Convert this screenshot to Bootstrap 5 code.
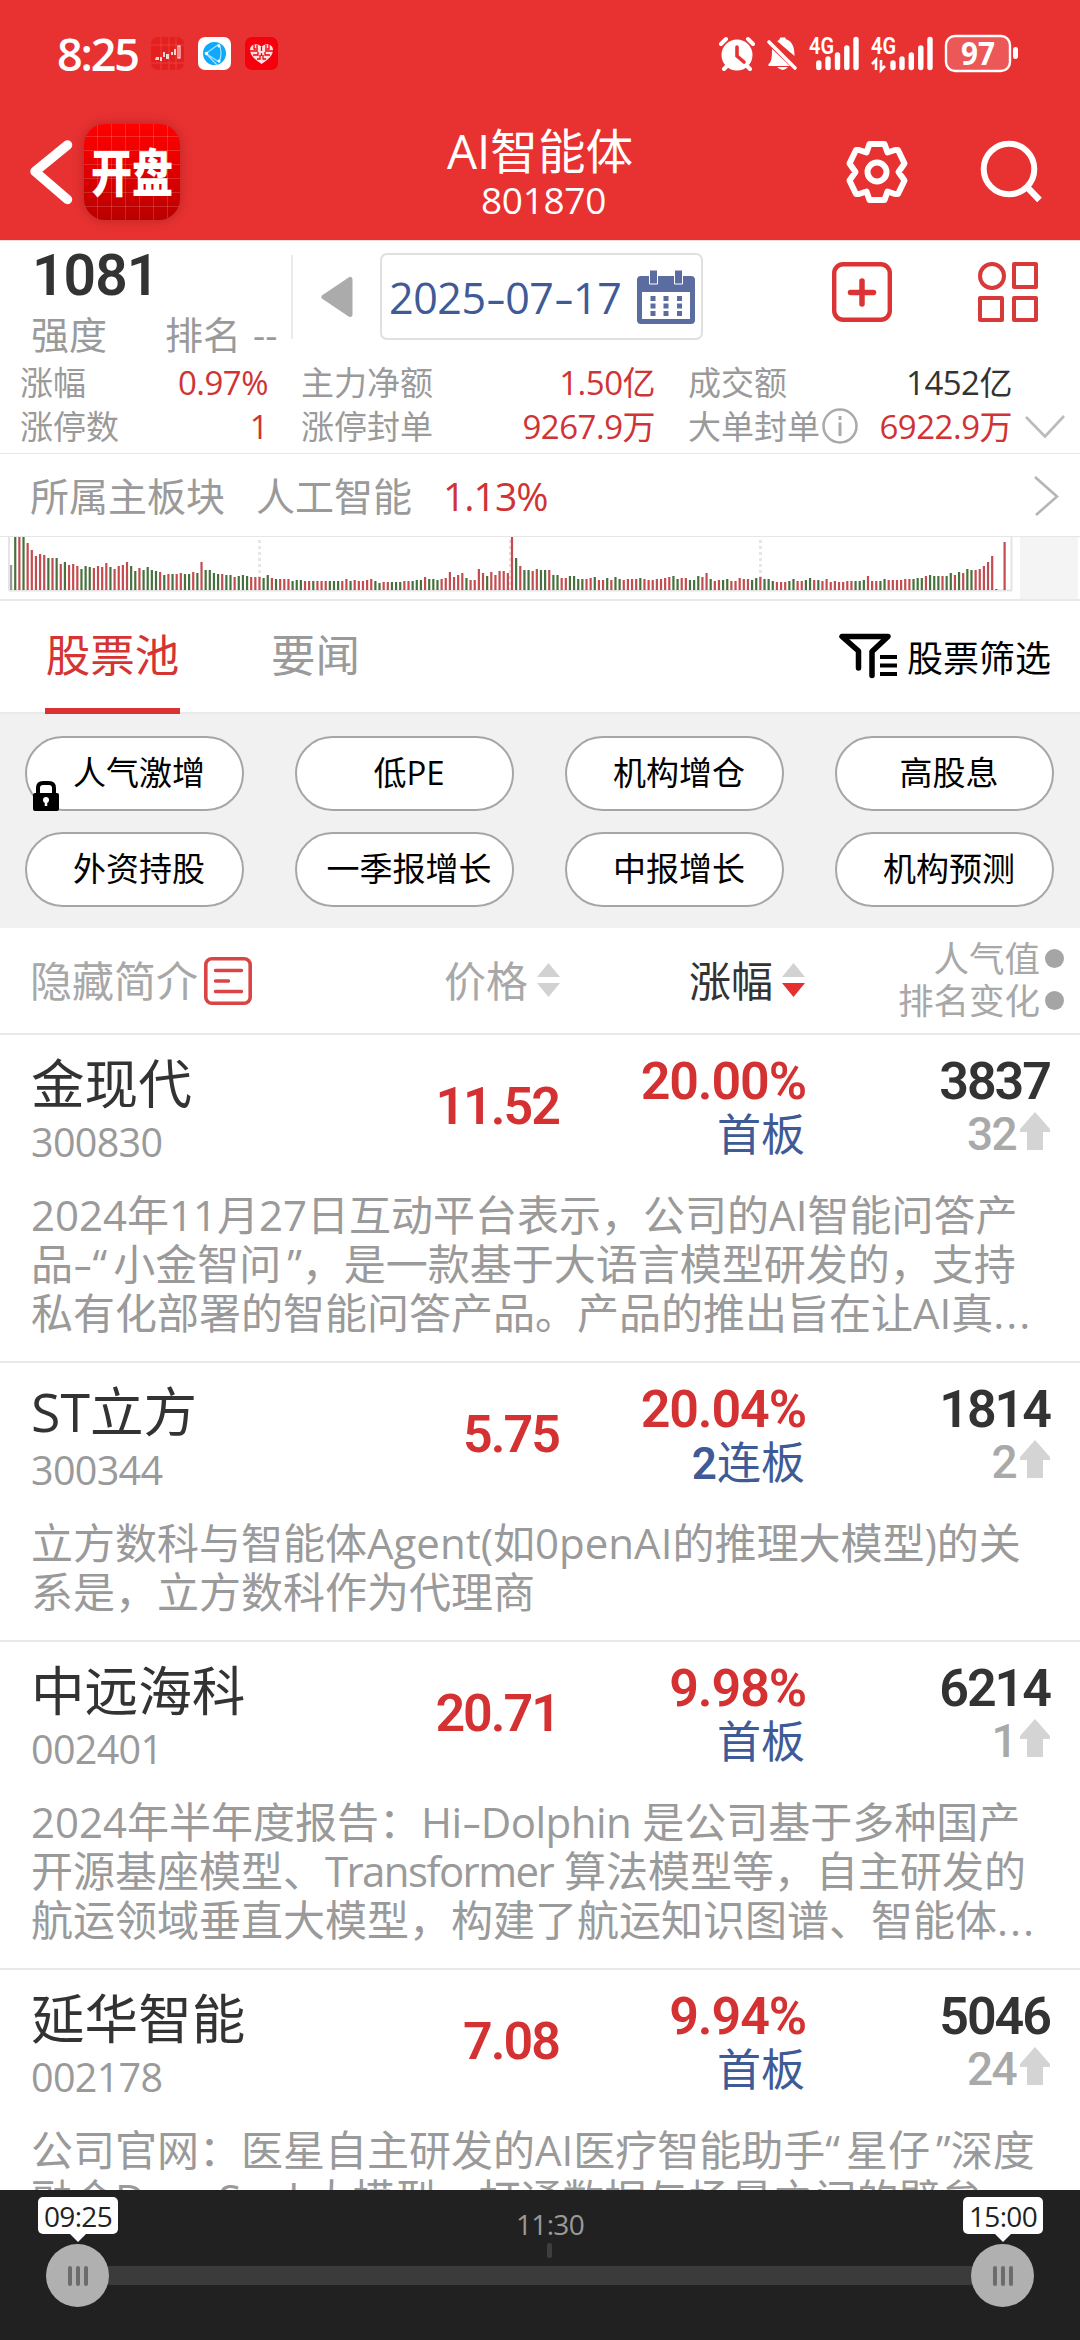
<!DOCTYPE html>
<html lang="zh-CN">
<head>
<meta charset="utf-8">
<meta name="viewport" content="width=device-width, initial-scale=1">
<title>AI智能体 801870</title>
<link href="https://cdn.jsdelivr.net/npm/bootstrap@5.3.0/dist/css/bootstrap.min.css" rel="stylesheet">
<style>
:root{--r:#cf3335;--g9:#9a9a9a;--blue:#3f5b97}
html,body{width:1080px;height:2340px;overflow:hidden}
body{font-family:"Open Sans","Noto Sans CJK SC",sans-serif;color:#333;background:#fff;line-height:1;margin:0}
svg{display:block;flex:none}
.din{font-family:Roboto,"Noto Sans CJK SC",sans-serif;font-weight:600}
.nw{white-space:nowrap}
.t-red{color:var(--r)}.t-gray{color:var(--g9)}.t-blue{color:var(--blue)}
.dash{display:inline-block;margin:0 3px;transform:scaleX(1.45)}
/* header */
.topbar{background:#e83131;color:#fff;height:241px;border-bottom:1px solid #fbdcdc}
.status{height:104px;padding:35px 51px 0 57px}
.clock{font-size:45px;line-height:38px;font-weight:600;letter-spacing:-2.2px;width:94px}
.titlebar{height:136px;padding:0 38px 0 29px}
.tile{width:96px;height:96px;border-radius:21px;background:repeating-linear-gradient(90deg,transparent 0 13px,#ffffff28 13px 14px),repeating-linear-gradient(0deg,transparent 0 13px,#ffffff28 13px 14px),linear-gradient(#ff0000,#f00000 30%,#b80000);box-shadow:0 0 12px #00000038}
.tile span{font:900 41px/50px "Noto Sans CJK SC",sans-serif;transform:scaleY(1.25);display:block;margin-top:-6px}
.titles{padding-top:20px}
.t1{font-size:47.6px;line-height:54px}
.t2{font-size:37px;line-height:44px;letter-spacing:-.3px;padding-left:7px}
/* summary */
.sum{height:119px}
.sum-l{width:291px;padding:5px 0 0 31px}
.sum-l .big{font-size:57px;line-height:60px;letter-spacing:-1px;margin-left:1px}
.sum-l .sub{font-size:38px;line-height:44px;margin-top:6px}
.vline{width:2px;height:84px;background:#ebebeb;margin-top:14px}
.datebox{width:323px;height:87px;border:2px solid #e0e0e0;border-radius:7px;margin:12px 0 0 27px;padding:0 6px 0 7px}
.datebox .dt{font-size:43px;letter-spacing:-.4px;padding-top:1px}
.stats{height:94px;padding:1px 0 0 20px;font-size:33px;line-height:44px;border-bottom:1px solid #e6e6e6}
.stats .c1{width:248px}.stats .c2{width:354px;margin-left:33px}.stats .c3{width:324px;margin-left:33px}
.val{letter-spacing:-.5px}
.sector{height:83px;padding:1px 21px 0 30px;font-size:39px;border-bottom:1px solid #e6e6e6}
.chart{height:64px;border-bottom:2px solid #e9e9e9}
/* tabs */
.tabs{height:113px;padding-left:45px;border-bottom:2px solid #e9e9e9}
.tabs .tb{font-size:44.5px;height:113px;line-height:107px}
.tabs .on{color:#d63333;width:135px;border-bottom:6px solid #dc3131;text-align:center}
.filt{font-size:36px;color:#000;margin-right:29px;padding-top:5px}
.pills{background:#f1f1f1;height:214px;padding:22px 26px 0 25px;display:grid;grid-template-columns:repeat(4,219px);grid-auto-rows:75px;gap:21px 51px}
.pl{border:2px solid #a6a6a6;border-radius:38px;background:#fff;color:#000;font-size:33px;padding:0 0 2px 9px;position:relative}
.lock{position:absolute;left:6px;bottom:-2px}
/* list head */
.lhead{height:107px;border-bottom:2px solid #e8e8e8;color:#a8a8a8;font-size:42px;padding:1px 0 0 30px}
.hsmall{font-size:35.5px;line-height:42px}
.hdot{width:19px;height:19px;border-radius:50%;background:#a5a5a5;margin-left:5px}
/* rows */
.list{height:1155px;overflow:hidden}
.stock{border-bottom:2px solid #e8e8e8;padding:18px 30px 24px 31px}
.rowtop{height:118px}
.name{font-size:53.6px;line-height:62px}
.code{font-size:39.5px;line-height:56px;letter-spacing:-.7px;color:var(--g9);margin-top:-1px}
.c-name{width:240px}.c-price{width:288px;padding-bottom:10px}.c-chg{width:247px;padding-top:1px}.c-hot{width:244px;padding-top:1px}
.num{font-size:52px;line-height:56px;letter-spacing:-2px}
.price,.chg{color:#d43132}
.chg{letter-spacing:-1.1px}
.tag{font-size:44px;line-height:48px;color:var(--blue);padding-right:1px}
.rk{font-size:46px;line-height:48px;color:#a9a9a9;font-weight:500;height:52px;letter-spacing:-1.6px}
.rk svg{margin:2px 0 0 4px}
.intro{font-size:42px;line-height:49px;color:var(--g9);margin-top:19px;white-space:nowrap}
.ql{margin-right:6px}.qr{margin-left:6px}.el{letter-spacing:2px}.k1{letter-spacing:-1.6px}.k2{letter-spacing:-.5px}
/* time range */
.range{height:150px;background:#212121;position:relative}
.range .tip{position:absolute;top:7px;width:80px;height:37px;border-radius:5px;background:#fff;color:#222;font-size:28px;line-height:38px;text-align:center;letter-spacing:-.7px}
.range .tip::after{content:"";position:absolute;left:31px;top:36px;border:9px solid transparent;border-top-color:#fff;border-bottom:0}
.range .knob{position:absolute;top:54px;width:63px;height:63px;border-radius:50%;background:#b0b0b0}
.range .knob i{width:4px;height:20px;border-radius:2px;background:#6c6c6c}
.range .track{position:absolute;left:78px;top:76px;width:924px;height:19px;background:#3b3b3b}
.range .mid{position:absolute;left:500px;width:100px;top:20px;font-size:28px;line-height:28px;color:#999;text-align:center;letter-spacing:-.7px}
.range .tick{position:absolute;left:547px;top:53px;width:5px;height:15px;border-radius:2px;background:#3e3e3e}
</style>
</head>
<body>
<header class="topbar">
  <div class="status d-flex align-items-start">
    <div class="clock nw">8:25</div>
    <svg width="127" height="34" viewBox="0 0 127 34" style="margin-top:2px">
      <rect width="33" height="33" rx="7" fill="#e3201f"/><path d="M10 0v33M18 0v33M25 0v33M0 26h33M0 8h33" stroke="#ee5a55" stroke-width=".5"/>
      <path d="M4 23h4v-3h-3zM9 20h2v4h-2zM12 15h2v5h-2zM15 17h3v5h-3zM20 15h2v3h-2zM23 12h2v6h-2z" fill="#fbd5d2"/><rect x="27" y="9" width="2" height="12" fill="none" stroke="#fff"/>
      <rect x="47" width="33" height="33" rx="7" fill="#fff"/><circle cx="63.500" cy="16.500" r="11.500" fill="#0fa9fb"/><path d="M68 7 55 16.500 68 25M68 7Q72 16 68 25M55 16.500 66 28" fill="none" stroke="#a6e3ff" stroke-width="1.200"/><circle cx="55.500" cy="16.500" r="1.800" fill="#fff"/><circle cx="68" cy="9" r="1.500" fill="#fff"/><circle cx="68" cy="24" r="1.500" fill="#fff"/>
      <rect x="94" width="33" height="33" rx="7" fill="#f5000d"/><path d="M110.500 27C103 22 99 18 99 12.500 99 7 107 5 110.500 10 114 5 122 7 122 12.500 122 18 118 22 110.500 27z" fill="#ffe0e0"/><path d="M103 7v5h4M107 14h-8M106 8v3M110.500 10v4M118 7v5h-4M114 14h8M115 8v3M102 18h5v-3M119 18h-5v-3M106 22h3v-4M115 22h-3v-4M110.500 16v3" stroke="#f5000d" stroke-width="1.300" fill="none"/>
    </svg>
    <svg class="ms-auto" width="310" height="54" viewBox="719 27 310 54" fill="#fff" style="margin-top:-8px">
      <circle cx="737" cy="55" r="15.500"/><path d="M721 44l5-5M753 44l-5-5M727 66l-3 3M747 66l3 3" stroke="#fff" stroke-width="4" stroke-linecap="round"/><path d="M737 47v9l7 6" fill="none" stroke="#e83131" stroke-width="3.600" stroke-linecap="round"/>
      <path d="M768.500 64c3-2 3.500-6 3.500-15l18 17h-21q-1 0-.5-2zM777 41q3-1 3-3.500h5.500V39c7 2 9 8 9 17z"/><path d="M777 67h11q-5 6-11 0z"/><path d="M769 42l26 26" stroke="#fff" stroke-width="3.600" stroke-linecap="round"/>
      <g stroke="#fff" stroke-width="5.400" stroke-linecap="round"><path d="M818.800 63v4.500M828 59v8.500M837.500 55v12.500M846.800 48v19.500M856 39.500v28M893 63v4.500M902 59v8.500M911.300 55v12.500M920.800 48v19.500M930 39.500v28"/></g>
      <text x="809" y="53.500" font-family="Roboto" font-weight="600" font-size="23" textLength="25" lengthAdjust="spacingAndGlyphs">4G</text>
      <text x="871" y="53.500" font-family="Roboto" font-weight="600" font-size="23" textLength="25" lengthAdjust="spacingAndGlyphs">4G</text>
      <path d="M872 64l4-4v10M885 66l-4 4V60" fill="none" stroke="#fff" stroke-width="2.600"/>
      <rect x="946" y="36" width="64" height="35" rx="9" fill="#ffffff30" stroke="#fff" stroke-width="2.400"/><rect x="1013" y="47" width="5" height="12" rx="2.500"/>
      <text x="978" y="64.500" text-anchor="middle" font-family="Open Sans" font-weight="700" font-size="32" textLength="34" lengthAdjust="spacingAndGlyphs">97</text>
    </svg>
  </div>
  <div class="titlebar d-flex align-items-center justify-content-between position-relative">
    <div class="d-flex align-items-center">
      <svg width="55" height="72" viewBox="29 136 55 72"><path d="M67.500 145 35 171.500 67.500 199.500" fill="none" stroke="#fff" stroke-width="9.500" stroke-linecap="round" stroke-linejoin="round"/></svg>
      <div class="tile d-flex align-items-center justify-content-center"><span>开盘</span></div>
    </div>
    <div class="titles position-absolute start-0 end-0 top-0 text-center"><div class="t1">AI智能体</div><div class="t2">801870</div></div>
    <div class="d-flex align-items-center">
      <svg width="64" height="64" viewBox="0 0 64 64" style="margin-right:71px" fill="none" stroke="#fff" stroke-width="6" stroke-linejoin="round"><path d="M24.500 4h15l3 8.500 7.500-2.500h3l6.500 13.500-6 8.500 6 8.500L53 54h-3l-7.500-2.500-3 8.500h-15l-3-8.500L14 54h-3L4.500 40.500l6-8.500-6-8.500L11 10h3l7.500 2.500z"/><circle cx="32" cy="32" r="9.500"/></svg>
      <svg width="62" height="64" viewBox="980 140 62 64" fill="none" stroke="#fff"><circle cx="1009" cy="169" r="25.300" stroke-width="6"/><path d="M1027 187l12.500 13" stroke-width="6.500"/></svg>
    </div>
  </div>
</header>

<section class="sum d-flex">
  <div class="sum-l"><div class="big din">1081</div><div class="sub t-gray d-flex"><span>强度</span><span style="margin-left:58px">排名</span><span style="margin-left:12px">--</span></div></div>
  <div class="vline"></div>
  <svg width="32" height="42" viewBox="0 0 32 42" style="margin:35px 0 0 28px"><path d="M3 21 29 3.500v35z" fill="#ababab" stroke="#ababab" stroke-width="5" stroke-linejoin="round"/></svg>
  <div class="datebox d-flex align-items-center justify-content-between t-blue"><span class="dt nw">2025<span class="dash">-</span>07<span class="dash">-</span>17</span>
    <svg width="58" height="54" viewBox="0 0 58 54"><rect y="6" width="58" height="48" rx="4" fill="#5b6ca0"/><path d="M5 22h48v27H5z" fill="#fff"/><path d="M12.500 0h8v14h-8zM37.500 0h8v14h-8z" fill="#5b6ca0" stroke="#fff"/><path d="M16 26v20M29 26v20M42.500 26v20" stroke="#5b6ca0" stroke-width="5" stroke-dasharray="5 2.500"/></svg>
  </div>
  <svg width="60" height="60" viewBox="0 0 60 60" style="margin:21px 0 0 129px" fill="none" stroke="#dc3434"><rect x="2.200" y="2.200" width="55.600" height="55.600" rx="9" stroke-width="4.400"/><path d="M30 19v23M18.500 30.500h23" stroke-width="5.500" stroke-linecap="round"/></svg>
  <svg width="60" height="60" viewBox="0 0 60 60" style="margin:21px 0 0 86px" fill="none" stroke="#d83a3a" stroke-width="4" stroke-linejoin="round"><circle cx="14" cy="14" r="12"/><path d="M36 2h22v23H36zM2 36h22v22H2zM36 36h22v22H36z"/></svg>
</section>
<section class="stats">
  <div class="d-flex"><div class="c1 d-flex justify-content-between"><span class="t-gray">涨幅</span><span class="val t-red">0.97%</span></div><div class="c2 d-flex justify-content-between"><span class="t-gray">主力净额</span><span class="val t-red">1.50亿</span></div><div class="c3 d-flex justify-content-between"><span class="t-gray">成交额</span><span class="val">1452亿</span></div></div>
  <div class="d-flex"><div class="c1 d-flex justify-content-between"><span class="t-gray">涨停数</span><span class="val t-red">1</span></div><div class="c2 d-flex justify-content-between"><span class="t-gray">涨停封单</span><span class="val t-red">9267.9万</span></div><div class="c3 d-flex"><span class="t-gray">大单封单</span><svg width="36" height="36" viewBox="0 0 36 36" style="margin:3px 0 0 2px" fill="none" stroke="#aaa"><circle cx="18" cy="18" r="16.500" stroke-width="2.500"/><path d="M18 14.500V28M18 8v4" stroke-width="3"/></svg><span class="val t-red ms-auto">6922.9万</span></div>
  <svg width="40" height="24" viewBox="0 0 40 24" style="margin:10px 0 0 13px"><path d="M1 2 20 21.500 39 1" fill="none" stroke="#bbb" stroke-width="2.600"/></svg></div>
</section>
<section class="sector d-flex align-items-center"><span class="t-gray">所属主板块</span><span class="t-gray" style="margin-left:31px">人工智能</span><span class="t-red" style="margin-left:31px;letter-spacing:-1px">1.13%</span>
  <svg class="ms-auto" width="26" height="40" viewBox="0 0 26 40"><path d="M2 1 24 20.500 3 39" fill="none" stroke="#b5b5b5" stroke-width="2.600"/></svg></section>
<section class="chart"><svg id="vol" width="1080" height="62" viewBox="0 0 1080 62"><path d="M9 0v53.500M9 53.500H1012M1011.500 0v54" stroke="#e4e4e4" stroke-width="2" fill="none"/><path d="M259.500 3v38M760.500 3v38" stroke="#e6e6e6" stroke-width="3" stroke-dasharray="3 3"/><path d="M510 3v50" stroke="#fbd5d5" stroke-width="2" stroke-dasharray="3 3"/><rect x="1020" width="58" height="62" fill="#f4f4f4"/></svg></section>

<nav class="tabs d-flex"><div class="tb on nw">股票池</div><div class="tb t-gray nw" style="margin-left:91px">要闻</div>
  <div class="filt d-flex align-items-center ms-auto"><svg width="58" height="46" viewBox="0 0 58 46" style="margin:-6px 10px 0 0" fill="none" stroke="#000" stroke-width="5.500" stroke-linecap="round" stroke-linejoin="round"><path d="M19.500 35V18L3 3.500h46L33 18.500v24"/><path d="M41 24h17M41 32.500h17M41 41h17" stroke-width="4" stroke-linecap="butt"/></svg><span>股票筛选</span></div></nav>
<section class="pills">
  <div class="pl d-flex align-items-center justify-content-center">人气激增<svg class="lock" width="26" height="30" viewBox="0 0 26 30"><path d="M5 14V7q0-5 5-5h6q5 0 5 5v7" fill="none" stroke="#000" stroke-width="4"/><rect y="12" width="26" height="18" rx="2"/><circle cx="13" cy="19" r="3" fill="#fff"/><path d="M13 19v6" stroke="#fff" stroke-width="2.500"/></svg></div>
  <div class="pl d-flex align-items-center justify-content-center">低PE</div>
  <div class="pl d-flex align-items-center justify-content-center">机构增仓</div>
  <div class="pl d-flex align-items-center justify-content-center">高股息</div>
  <div class="pl d-flex align-items-center justify-content-center">外资持股</div>
  <div class="pl nw d-flex align-items-center justify-content-center">一季报增长</div>
  <div class="pl d-flex align-items-center justify-content-center">中报增长</div>
  <div class="pl d-flex align-items-center justify-content-center">机构预测</div>
</section>
<section class="lhead d-flex align-items-center">
  <span>隐藏简介</span>
  <svg width="48" height="48" viewBox="0 0 48 48" style="margin-left:6px" fill="none" stroke="#d94545"><rect x="1.800" y="1.800" width="44.400" height="44.400" rx="6" stroke-width="3.600"/><path d="M11.500 13.500h26M11.500 24h13M11.500 34.500h26" stroke-width="3.400" stroke-linecap="round"/></svg>
  <span style="margin-left:192px">价格</span>
  <svg width="23" height="34" viewBox="0 0 23 34" style="margin:-2px 0 0 9px" fill="#d2d2d2"><path d="M0 14 11.500 0 23 14zM0 20h23L11.500 34z"/></svg>
  <span style="margin-left:129px;color:#333">涨幅</span>
  <svg width="23" height="34" viewBox="0 0 23 34" style="margin:-2px 0 0 9px"><path d="M0 14 11.500 0 23 14z" fill="#d2d2d2"/><path d="M0 20h23L11.500 34z" fill="#e53030"/></svg>
  <div class="hsmall ms-auto" style="margin-right:16px;margin-top:-4px"><div class="d-flex align-items-center justify-content-end">人气值<i class="hdot"></i></div><div class="d-flex align-items-center justify-content-end">排名变化<i class="hdot"></i></div></div>
</section>

<main class="list">
  <article class="stock">
    <div class="rowtop d-flex"><div class="c-name"><div class="name nw">金现代</div><div class="code">300830</div></div><div class="c-price d-flex align-items-center justify-content-end"><span class="num din price">11.52</span></div><div class="c-chg text-end"><div class="num din chg">20.00%</div><div class="tag">首板</div></div><div class="c-hot"><div class="num din text-end">3837</div><div class="rk din d-flex justify-content-end">32<svg width="30" height="38" viewBox="0 0 30 38"><path d="M15 0 30 17v3h-7v18H7V20H0v-3z" fill="#d4d4d4"/></svg></div></div></div>
    <div class="intro">2024年11月27日互动平台表示，公司的AI智能问答产<br>品<span class="dash">-</span><span class="ql">“</span>小金智问<span class="qr">”</span>，是一款基于大语言模型研发的，支持<br>私有化部署的智能问答产品。产品的推出旨在让AI真<span class="el">...</span></div>
  </article>
  <article class="stock">
    <div class="rowtop d-flex"><div class="c-name"><div class="name nw">ST立方</div><div class="code">300344</div></div><div class="c-price d-flex align-items-center justify-content-end"><span class="num din price">5.75</span></div><div class="c-chg text-end"><div class="num din chg">20.04%</div><div class="tag"><span class="din">2</span>连板</div></div><div class="c-hot"><div class="num din text-end">1814</div><div class="rk din d-flex justify-content-end">2<svg width="30" height="38" viewBox="0 0 30 38"><path d="M15 0 30 17v3h-7v18H7V20H0v-3z" fill="#d4d4d4"/></svg></div></div></div>
    <div class="intro">立方数科与智能体Agent(如0penAI的推理大模型)的关<br>系是，立方数科作为代理商</div>
  </article>
  <article class="stock">
    <div class="rowtop d-flex"><div class="c-name"><div class="name nw">中远海科</div><div class="code">002401</div></div><div class="c-price d-flex align-items-center justify-content-end"><span class="num din price">20.71</span></div><div class="c-chg text-end"><div class="num din chg">9.98%</div><div class="tag">首板</div></div><div class="c-hot"><div class="num din text-end">6214</div><div class="rk din d-flex justify-content-end">1<svg width="30" height="38" viewBox="0 0 30 38"><path d="M15 0 30 17v3h-7v18H7V20H0v-3z" fill="#d4d4d4"/></svg></div></div></div>
    <div class="intro">2024年半年度报告：<span class="k2">Hi<span class="dash">-</span>Dolphin</span> 是公司基于多种国产<br>开源基座模型、<span class="k1">Transformer</span> 算法模型等，自主研发的<br>航运领域垂直大模型，构建了航运知识图谱、智能体<span class="el">...</span></div>
  </article>
  <article class="stock">
    <div class="rowtop d-flex"><div class="c-name"><div class="name nw">延华智能</div><div class="code">002178</div></div><div class="c-price d-flex align-items-center justify-content-end"><span class="num din price">7.08</span></div><div class="c-chg text-end"><div class="num din chg">9.94%</div><div class="tag">首板</div></div><div class="c-hot"><div class="num din text-end">5046</div><div class="rk din d-flex justify-content-end">24<svg width="30" height="38" viewBox="0 0 30 38"><path d="M15 0 30 17v3h-7v18H7V20H0v-3z" fill="#d4d4d4"/></svg></div></div></div>
    <div class="intro">公司官网：医星自主研发的AI医疗智能助手<span class="ql">“</span>星仔<span class="qr">”</span>深度<br>融合DeepSeek大模型，打通数据与场景之间的壁垒，</div>
  </article>
</main>

<footer class="range">
  <div class="track"></div><div class="mid">11:30</div><div class="tick"></div>
  <div class="knob d-flex align-items-center justify-content-center gap-1" style="left:46px"><i></i><i></i><i></i></div>
  <div class="knob d-flex align-items-center justify-content-center gap-1" style="left:971px"><i></i><i></i><i></i></div>
  <div class="tip" style="left:38px">09:25</div><div class="tip" style="left:963px">15:00</div>
</footer>
<script src="https://cdn.jsdelivr.net/npm/bootstrap@5.3.0/dist/js/bootstrap.bundle.min.js"></script>
<script>
// volume per minute: height followed by colour (r up, g down, x flat)
const vol = ("25x 53g 53r 53g 47r 40r 34r 36r 35r 32g 32r 32g 26r 28g 25r 26r 24r 21g 24g 23g 22r 24r 23r 27r 23g 21r 24r 25r 28r 24g 19g 22r 20g 23g 20g 19g 18r 15g 16r 16g 16r 17r 16g 16g 18r 17g 28r 20g 20g 17g 16g 16r 15g 15g 13r 14g 15g 14g 13r 13r 13r 12g 15g 12r 11g 11r 11r 11r 9g 10g 10g 9r 9r 9g 9r 9r 9r 9g 9g 9g 9r 11r 9g 10r 9r 9r 10r 11r 9g 7g 8r 8r 8g 8g 8g 9r 9r 9g 10g 10g 13r 11g 11g 10g 11r 12r 18r 13r 15r 17r 12g 10r 10r 21r 17r 14g 18r 15r 19r 19r 17r 53r 32g 24r 20g 20g 19r 21r " +
"20g 20g 20r 15g 15g 12r 12r 14g 14g 11g 11g 11r 12r 13g 10r 10r 12g 10r 13g 11g 10r 11r 11r 11r 12g 11r 10r 10r 11r 11r 12r 13r 14g 11g 12r 12r 10g 10g 14g 13r 17r 11g 9r 10r 10g 11g 9r 9r 12r 11r 11r 10g 12g 13r 11g 11g 9g 8r 8r 8r 9g 11g 9r 9r 10g 12g 10r 10g 9r 11r 8r 9r 8r 8r 9r 9r 9g 9g 10g 14r 9r 9r 9g 11g 10r 10r 10r 10r 11r 11r 11g 12g 12g 14r 15g 14g 14g 14r 14g 17g 15r 18g 17r 21g 20g 20r 21r 24r 28r 34r 1g 0r 48r").split(" ");
const svg = document.getElementById("vol"), step = 993.5 / (vol.length - 1);
const col = {r: "#c24c50", g: "#47713c", x: "#999"};
vol.forEach((v, i) => {
  const h = parseInt(v), b = document.createElementNS("http://www.w3.org/2000/svg", "rect");
  b.setAttribute("x", (10 + i * step).toFixed(2)); b.setAttribute("y", 53 - h);
  b.setAttribute("width", 2.2); b.setAttribute("height", h); b.setAttribute("fill", col[v.slice(-1)]);
  svg.appendChild(b);
});
</script>
</body>
</html>
